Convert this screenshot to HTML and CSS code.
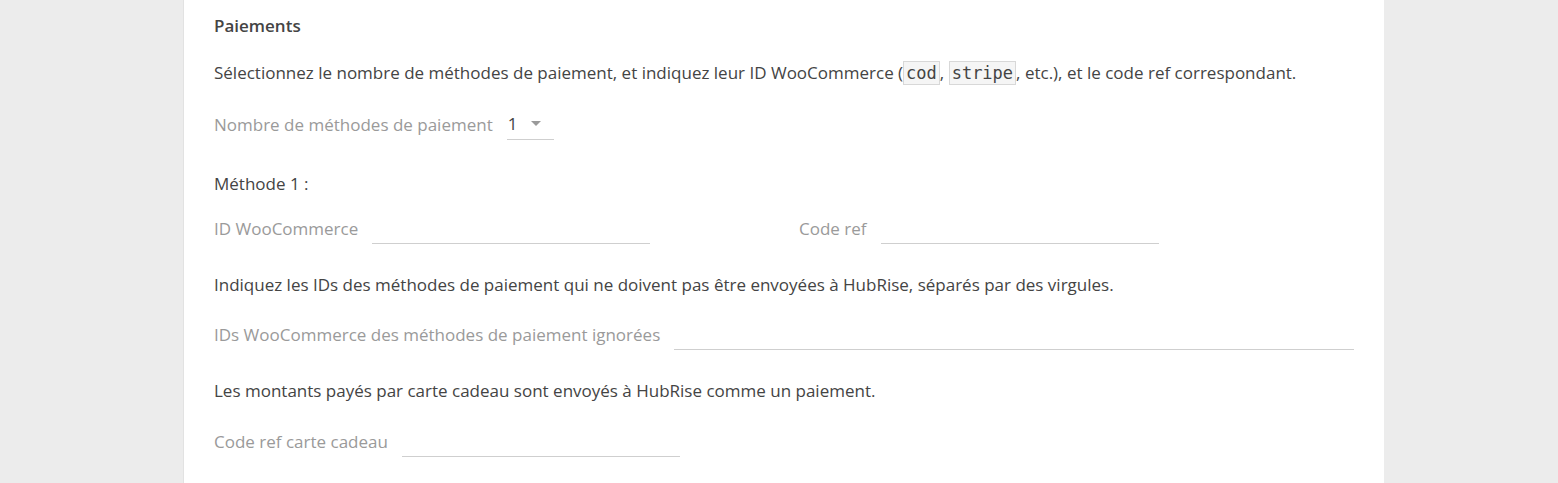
FILE: index.html
```html
<!DOCTYPE html>
<html lang="fr">
<head>
  <meta charset="UTF-8">
  <meta name="viewport" content="width=device-width, initial-scale=1.0">
  <title>Paiements</title>
  <link rel="stylesheet" href="styles.css">
</head>
<body>
  <div class="card">
    <h3 class="section-title">Paiements</h3>
    <p class="help">Sélectionnez le nombre de méthodes de paiement, et indiquez leur ID WooCommerce (<code>cod</code>, <code>stripe</code>, etc.), et le code ref correspondant.</p>

    <div class="field field-select">
      <label for="payment-count">Nombre de méthodes de paiement</label>
      <div class="select" id="payment-count">
        <span class="select-value">1</span>
        <span class="select-arrow"></span>
      </div>
    </div>

    <p class="method-title">Méthode 1 :</p>
    <div class="columns">
      <div class="field">
        <label for="woo-id-1">ID WooCommerce</label>
        <input id="woo-id-1" type="text" class="input">
      </div>
      <div class="field">
        <label for="ref-1">Code ref</label>
        <input id="ref-1" type="text" class="input">
      </div>
    </div>

    <p class="help help-spaced">Indiquez les IDs des méthodes de paiement qui ne doivent pas être envoyées à HubRise, séparés par des virgules.</p>
    <div class="field field-wide">
      <label for="ignored-ids">IDs WooCommerce des méthodes de paiement ignorées</label>
      <input id="ignored-ids" type="text" class="input">
    </div>

    <p class="help help-spaced">Les montants payés par carte cadeau sont envoyés à HubRise comme un paiement.</p>
    <div class="field field-last">
      <label for="gift-ref">Code ref carte cadeau</label>
      <input id="gift-ref" type="text" class="input">
    </div>
  </div>
</body>
</html>
```

FILE: styles.css
```css
body {
  margin: 0;
  background: #ececec;
  font-family: 'Open Sans', 'Noto Sans', sans-serif;
  font-size: 17px;
  color: #444;
}
.card {
  width: 1140px;
  min-height: 483px;
  margin-left: 183px;
  padding: 14px 30px 0;
  background: #fff;
  border-left: 1px solid #e2e2e2;
  box-sizing: content-box;
}
.section-title {
  margin: 0;
  font-size: 17px;
  font-weight: 600;
  line-height: 24px;
  color: #444;
}
p {
  margin: 0;
  line-height: 24px;
}
.help {
  margin-top: 23px;
}
.help-spaced {
  margin-top: 29px;
}
code {
  font-family: 'DejaVu Sans Mono', monospace;
  font-size: 17px;
  padding: 1px 2px;
  background: #f5f5f5;
  border: 1px solid #d8d8d8;
  color: #444;
}
.field {
  display: flex;
  align-items: center;
  gap: 14px;
  height: 32px;
}
.field label {
  color: #9a9a9a;
  white-space: nowrap;
}
.field-select {
  margin-top: 23px;
}
.input {
  width: 278px;
  height: 32px;
  box-sizing: border-box;
  border: none;
  border-bottom: 1px solid #cfcfcf;
  background: transparent;
  font: inherit;
  outline: none;
}
.field-wide {
  margin-top: 21px;
}
.field-wide .input {
  flex: 1;
}
.field-last {
  margin-top: 22px;
}
.select {
  display: flex;
  align-items: center;
  gap: 14px;
  width: 47px;
  height: 32px;
  box-sizing: border-box;
  padding-left: 1px;
  border-bottom: 1px solid #cfcfcf;
  color: #444;
}
.select-arrow {
  width: 0;
  height: 0;
  border-left: 5px solid transparent;
  border-right: 5px solid transparent;
  border-top: 5px solid #9a9a9a;
}
.method-title {
  margin-top: 32px;
}
.columns {
  display: grid;
  grid-template-columns: 1fr 1fr;
  gap: 30px;
  margin-top: 16px;
}
```
